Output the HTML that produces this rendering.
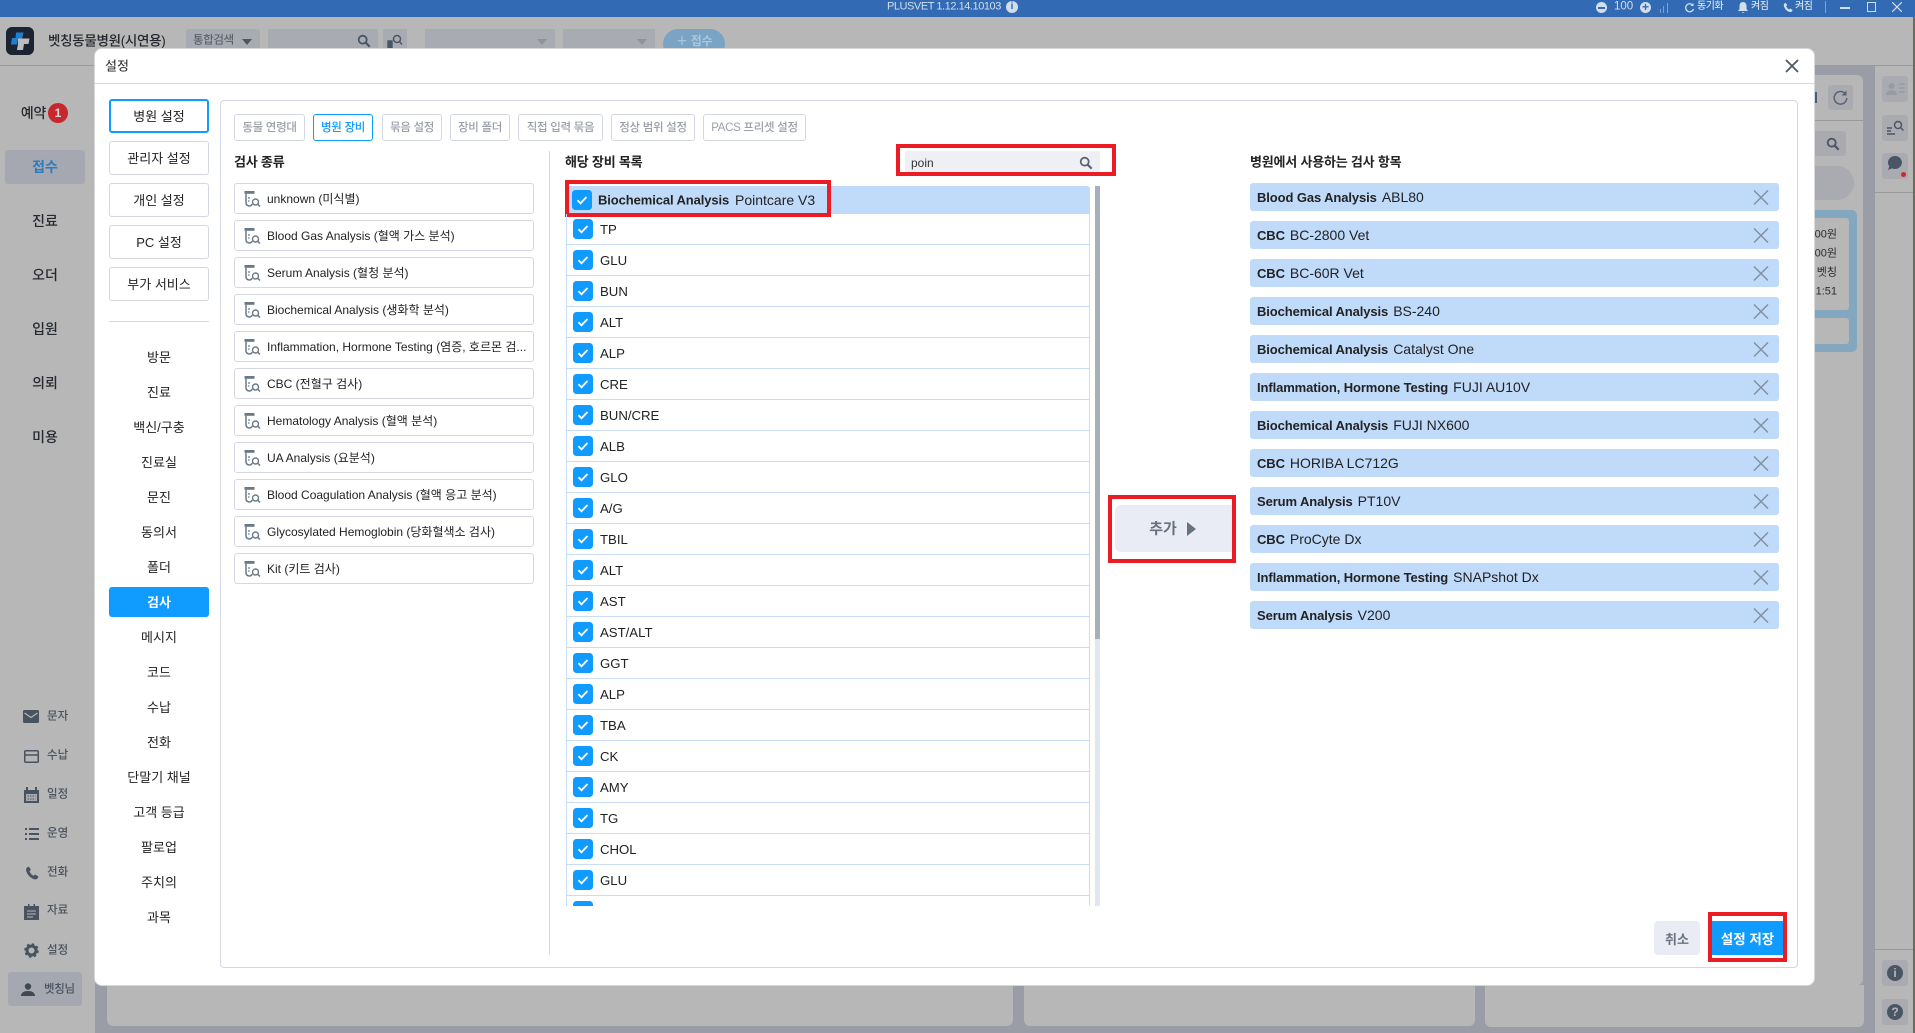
<!DOCTYPE html>
<html lang="ko"><head><meta charset="utf-8"><title>설정</title>
<style>
*{box-sizing:border-box}
html,body{margin:0;padding:0;width:1915px;height:1033px;overflow:hidden;background:#9a9da5;font-family:"Liberation Sans","Noto Sans CJK KR",sans-serif;color:#222}
.a{position:absolute}
.c{position:absolute;transform:translate(-50%,-50%);white-space:nowrap;line-height:1}
.l{position:absolute;transform:translateY(-50%);white-space:nowrap;line-height:1}
.nav{font-size:14px;color:#262a30;font-weight:500}
.sub{font-size:11.5px;color:#49535f;font-weight:500}
.top{font-size:10px;color:#d3deec}
.bt{position:absolute;left:109px;width:100px;height:34px;border:1px solid #d5d8e4;border-radius:3px;background:#fff;font-size:13px;display:flex;align-items:center;justify-content:center;padding-bottom:2px}
.mi{position:absolute;left:109px;width:100px;height:30px;display:flex;align-items:center;justify-content:center;font-size:13px;color:#222;border-radius:3px;padding-bottom:2px}
.tab{position:absolute;top:114px;height:27px;border:1px solid #d5d8e4;border-radius:3px;font-size:11.5px;color:#9aa0aa;display:flex;align-items:center;justify-content:center;white-space:nowrap;letter-spacing:-.3px;font-weight:500;padding-bottom:1px}
.h{position:absolute;top:162px;transform:translateY(-50%);font-size:13px;font-weight:700;line-height:1;color:#222;white-space:nowrap;letter-spacing:-.2px}
.ty{display:block;position:relative;height:31px;margin-bottom:6px;border:1px solid #d5d8e4;border-radius:3px;font-size:12px;line-height:31px;padding-left:32px;white-space:nowrap;background:#fff}
.ty svg{position:absolute;left:8px;top:6px}
.r{position:relative;height:31px;border:1px solid #c8dcf6;border-width:0 1px 1px 1px;font-size:13.2px;line-height:31px;padding-left:33px;color:#222}
.r svg{position:absolute;left:5.5px;top:5px}
.p{display:flex;align-items:center;height:28px;margin-bottom:10px;background:#c0dafa;border-radius:3px;font-size:14px;padding-left:7px;position:relative;white-space:nowrap;color:#222}
.p b{margin-right:5px;letter-spacing:-.1px;font-size:13px}
.p svg{position:absolute;right:10px;top:6.500px}
.red{position:absolute;border:4px solid #ec1c24}
</style></head><body>
<svg width="0" height="0" style="position:absolute">
<symbol id="t" viewBox="0 0 18 18"><path d="M1.500 1h10v2.800h-10z" fill="#6b7886"/><path d="M3 3.800V13a3.300 3.300 0 0 0 6.300 1" fill="none" stroke="#6b7886" stroke-width="1.500"/><circle cx="12.500" cy="12" r="3" fill="none" stroke="#6b7886" stroke-width="1.400"/><path d="M14.700 14.200l2.300 2.300" stroke="#6b7886" stroke-width="1.500"/><path d="M5 8h2M5 11h1.500" stroke="#6b7886" stroke-width="1.200"/></symbol>
<symbol id="k" viewBox="0 0 20 20"><rect width="20" height="20" rx="3.500" fill="#0f9bff"/><path d="M5.500 10.300l3 3 6-6.300" fill="none" stroke="#fff" stroke-width="1.800"/></symbol>
<symbol id="x" viewBox="0 0 16 15"><path d="M1 .5l14 14M15 .5l-14 14" stroke="#8292a3" stroke-width="1.500" fill="none"/></symbol>
<symbol id="s" viewBox="0 0 14 14"><circle cx="5.700" cy="5.700" r="4" fill="none" stroke="currentColor" stroke-width="1.800"/><path d="M8.700 8.700l4 4" stroke="currentColor" stroke-width="2.200"/></symbol>
</svg>

<!-- Title bar -->
<div class="a" style="left:0;top:0;width:1915px;height:17px;background:#326bb3"></div>
<div class="l top" style="left:887px;top:7px;letter-spacing:-.45px;font-size:11px;font-weight:500">PLUSVET 1.12.14.10103</div>
<div class="a" style="left:1006px;top:1px;width:12px;height:12px;border-radius:50%;background:#d3deec;color:#326bb3;font-size:10px;font-weight:700;text-align:center;line-height:12px">i</div>
<div class="a" style="left:1596px;top:2px;width:11px;height:11px;border-radius:50%;background:#d3deec"></div>
<div class="a" style="left:1598px;top:7px;width:7px;height:1.500px;background:#326bb3"></div>
<div class="l top" style="left:1614px;top:7px;font-size:11.500px">100</div>
<div class="a" style="left:1640px;top:2px;width:11px;height:11px;border-radius:50%;background:#d3deec;color:#326bb3;font-size:12px;font-weight:700;text-align:center;line-height:11px">+</div>
<div class="a" style="left:1660px;top:9px;width:1px;height:4px;background:#7f9fcc"></div>
<div class="a" style="left:1663px;top:6px;width:1px;height:7px;background:#7f9fcc"></div>
<div class="a" style="left:1667px;top:3px;width:1px;height:10px;background:#7f9fcc"></div>
<svg class="a" style="left:1684px;top:2px" width="11" height="11" viewBox="0 0 11 11"><path d="M9 3.500A4 4 0 1 0 9.500 7" fill="none" stroke="#d3deec" stroke-width="1.300"/><path d="M9.500 1v3h-3z" fill="#d3deec"/></svg>
<div class="l top" style="left:1697px;top:7px;letter-spacing:-.5px;font-weight:500">동기화</div>
<svg class="a" style="left:1738px;top:2px" width="10" height="11" viewBox="0 0 10 11"><path d="M5 0a3.500 3.500 0 0 1 3.500 3.500V7L10 9H0l1.500-2V3.500A3.500 3.500 0 0 1 5 0zM3.500 10h3L5 11z" fill="#d3deec"/></svg>
<div class="l top" style="left:1751px;top:7px;letter-spacing:-.5px;font-weight:500">켜짐</div>
<svg class="a" style="left:1783px;top:2px" width="10" height="11" viewBox="0 0 24 24"><path d="M6.600 1l3.500 5.500-2.300 2.500c1 3 4 6.500 7 7.800l2.400-2.300L23 18c-.5 3-3 5-5.500 5C9 22 1 12 2 5c.3-2 2-3.500 4.600-4z" fill="#d3deec"/></svg>
<div class="l top" style="left:1795px;top:7px;letter-spacing:-.5px;font-weight:500">켜짐</div>
<div class="a" style="left:1825px;top:1px;width:1px;height:12px;background:#7f9fcc"></div>
<div class="a" style="left:1840px;top:7px;width:10px;height:1.500px;background:#d3deec"></div>
<div class="a" style="left:1867px;top:2px;width:9px;height:10px;border:1px solid #d3deec"></div>
<svg class="a" style="left:1892px;top:2px" width="10" height="10"><path d="M0 0l10 10M10 0L0 10" stroke="#d3deec" stroke-width="1.200"/></svg>

<!-- Dim app behind -->
<div class="a" style="left:0;top:17px;width:1915px;height:48px;background:#b7b7b7"></div>
<div class="a" style="left:0;top:65px;width:1915px;height:1px;background:#9a9a9a"></div>
<div class="a" style="left:0;top:66px;width:95px;height:967px;background:#b7b7b7"></div>
<div class="a" style="left:1875px;top:66px;width:38px;height:967px;background:#b7b7b7"></div>
<div class="a" style="left:1913px;top:17px;width:2px;height:1016px;background:#6b6b5c"></div>
<div class="a" style="left:1875px;top:192px;width:38px;height:1px;background:#9a9a9a"></div>
<div class="a" style="left:1875px;top:949px;width:38px;height:1px;background:#9a9a9a"></div>
<div class="a" style="left:107px;top:985px;width:906px;height:41px;background:#b7b7b7;border-radius:0 0 6px 6px"></div>
<div class="a" style="left:1024px;top:985px;width:451px;height:41px;background:#b7b7b7;border-radius:0 0 6px 6px"></div>
<div class="a" style="left:1485px;top:985px;width:379px;height:42px;background:#b7b7b7;border-radius:0 0 6px 6px"></div>
<div class="a" style="left:1700px;top:75px;width:163px;height:910px;background:#b7b7b7;border-radius:0 6px 6px 0"></div>
<div class="a" style="left:1700px;top:120px;width:163px;height:1px;background:#9a9a9a"></div>
<div class="a" style="left:1815px;top:92px;width:2px;height:11px;background:#3e5f86"></div>
<div class="a" style="left:1828px;top:85px;width:25px;height:25px;background:#a9abb1;border-radius:3px"></div>
<svg class="a" style="left:1832px;top:89px" width="17" height="17" viewBox="0 0 17 17"><path d="M13.500 5A6.300 6.300 0 1 0 14.800 9" fill="none" stroke="#59636f" stroke-width="1.500"/><path d="M14.500 1.500v5h-5z" fill="#59636f"/></svg>
<div class="a" style="left:1800px;top:131px;width:46px;height:25px;background:#a9abb1;border-radius:3px"></div>
<svg class="a" style="left:1826px;top:137px;color:#4b5665" width="14" height="14"><use href="#s"/></svg>
<div class="a" style="left:1780px;top:166px;width:74px;height:34px;background:#a9abb1;border-radius:17px"></div>
<div class="a" style="left:1780px;top:210px;width:77px;height:142px;background:#84a7c0;border-radius:0 5px 5px 0"></div>
<div class="a" style="left:1780px;top:218px;width:69px;height:92px;background:#b7b7b7;border-radius:3px"></div>
<div class="a" style="left:1780px;top:318px;width:69px;height:26px;background:#b7b7b7;border-radius:3px"></div>
<div class="l" style="right:78px;top:235px;font-size:11px;color:#2b2b2b">00원</div>
<div class="l" style="right:78px;top:254px;font-size:11px;color:#2b2b2b">00원</div>
<div class="l" style="right:78px;top:273px;font-size:11px;color:#2b2b2b">벳칭</div>
<div class="l" style="right:78px;top:292px;font-size:11px;color:#2b2b2b">1:51</div>

<div class="a" style="left:1882px;top:76px;width:26px;height:26px;background:#a9abb1;border-radius:3px"></div>
<svg class="a" style="left:1886px;top:82px" width="19" height="14" viewBox="0 0 19 14"><circle cx="5.500" cy="4" r="3" fill="#989ba1"/><path d="M0 13a5.500 5 0 0 1 11 0z" fill="#989ba1"/><path d="M13 2h6M13 6h6M13 10h6" stroke="#989ba1" stroke-width="1.500"/></svg>
<div class="a" style="left:1882px;top:115px;width:26px;height:26px;background:#a9abb1;border-radius:3px"></div>
<svg class="a" style="left:1886px;top:120px" width="18" height="16" viewBox="0 0 18 16"><circle cx="12" cy="5" r="3.500" fill="none" stroke="#4b5665" stroke-width="1.500"/><path d="M14.500 7.500l3 3M1 8h5M1 11h4M1 14h8" stroke="#4b5665" stroke-width="1.400"/></svg>
<div class="a" style="left:1882px;top:153px;width:26px;height:26px;background:#a9abb1;border-radius:3px"></div>
<svg class="a" style="left:1887px;top:155px" width="16" height="16" viewBox="0 0 16 16"><path d="M8 1a7 6.500 0 1 1-3 12.400L1 15l1.300-3.700A7 6.500 0 0 1 8 1z" fill="#4b5665"/></svg>
<div class="a" style="left:1901px;top:172px;width:5px;height:5px;border-radius:50%;background:#cc2a2a"></div>
<div class="a" style="left:1882px;top:960px;width:26px;height:26px;background:#a9abb1;border-radius:3px"></div>
<div class="a" style="left:1887px;top:965px;width:16px;height:16px;border-radius:50%;background:#4b5665;color:#b7b7b7;font-size:12px;font-weight:700;text-align:center;line-height:16px">i</div>
<div class="a" style="left:1882px;top:999px;width:26px;height:26px;background:#a9abb1;border-radius:3px"></div>
<div class="a" style="left:1887px;top:1004px;width:16px;height:16px;border-radius:50%;background:#4b5665;color:#b7b7b7;font-size:12px;font-weight:700;text-align:center;line-height:16px">?</div>

<!-- Header -->
<div class="a" style="left:6px;top:27px;width:28px;height:28px;border-radius:6px;background:#1b2430"></div>
<svg class="a" style="left:6px;top:27px" width="28" height="28" viewBox="0 0 28 28"><path d="M10 5.500h7.500L16 12h-4l-1 5.500H5L6 11h3.500z" fill="#1f7fd0"/><path d="M12 11.500h11.500L22.500 17H18l-1 6h-6l1-6z" fill="#bcbcbc"/></svg>
<div class="l" style="left:48px;top:41px;font-size:13.500px;font-weight:500;color:#23272e;letter-spacing:-.3px">벳칭동물병원(시연용)</div>
<div class="a" style="left:186px;top:29px;width:74px;height:20px;background:#a8abb2;border-radius:3px 3px 0 0"></div>
<div class="l" style="left:193px;top:41px;font-size:11.500px;color:#4b5563;letter-spacing:-.4px">통합검색</div>
<div class="a" style="left:242px;top:39px;border:5px solid transparent;border-top:6px solid #4b5563"></div>
<div class="a" style="left:268px;top:29px;width:110px;height:20px;background:#a8abb2"></div>
<svg class="a" style="left:357px;top:34px;color:#4b5665" width="14" height="14"><use href="#s"/></svg>
<div class="a" style="left:383px;top:29px;width:24px;height:20px;background:#a8abb2"></div>
<svg class="a" style="left:387px;top:34px" width="16" height="14" viewBox="0 0 16 14"><circle cx="10" cy="5" r="3.500" fill="none" stroke="#4b5665" stroke-width="1.500"/><path d="M12.500 7.500l2.500 3M1 7h4v7H1z" stroke="#4b5665" stroke-width="1.400" fill="#4b5665"/></svg>
<div class="a" style="left:425px;top:29px;width:130px;height:20px;background:#a8abb2"></div>
<div class="a" style="left:537px;top:39px;border:5px solid transparent;border-top:6px solid #8e949c"></div>
<div class="a" style="left:563px;top:29px;width:92px;height:20px;background:#a8abb2"></div>
<div class="a" style="left:637px;top:39px;border:5px solid transparent;border-top:6px solid #8e949c"></div>
<div class="a" style="left:663px;top:29px;width:62px;height:30px;border-radius:15px;background:#7ba3c4"></div>
<div class="l" style="left:676px;top:41px;font-size:12px;color:#a9c7df;font-weight:700;letter-spacing:-.3px">＋ 접수</div>

<!-- Left nav -->
<div class="c nav" style="top:113px;transform:translate(-100%,-50%);left:46px;letter-spacing:-.3px">예약</div>
<div class="a" style="left:48px;top:103px;width:20px;height:20px;border-radius:50%;background:#c8272d;color:#d7d7d7;font-size:12px;font-weight:700;text-align:center;line-height:20px">1</div>
<div class="a" style="left:5px;top:150px;width:80px;height:34px;background:#a5a8b1;border-radius:3px"></div>
<div class="c nav" style="left:45px;top:167px;color:#2b7cc0;font-weight:700">접수</div>
<div class="c nav" style="left:45px;top:221px">진료</div>
<div class="c nav" style="left:45px;top:275px">오더</div>
<div class="c nav" style="left:45px;top:329px">입원</div>
<div class="c nav" style="left:45px;top:383px">의뢰</div>
<div class="c nav" style="left:45px;top:437px">미용</div>

<svg class="a" style="left:23px;top:710px" width="16" height="13" viewBox="0 0 16 13"><rect width="16" height="13" rx="1.500" fill="#49535f"/><path d="M1.500 3L8 7.500 14.500 3" fill="none" stroke="#b7b7b7" stroke-width="1.200"/></svg>
<div class="l sub" style="left:47px;top:717px">문자</div>
<svg class="a" style="left:24px;top:750px" width="15" height="13" viewBox="0 0 15 13"><rect x=".75" y=".75" width="13.500" height="11.500" rx="1" fill="none" stroke="#49535f" stroke-width="1.500"/><path d="M1 5h13" stroke="#49535f" stroke-width="1.500"/></svg>
<div class="l sub" style="left:47px;top:756px">수납</div>
<svg class="a" style="left:24px;top:787px" width="15" height="16" viewBox="0 0 15 16"><path d="M0 3h2V0h2v3h7V0h2v3h2v13H0z" fill="#49535f"/><path d="M2 7h11v7H2z" fill="#a9abb1"/><path d="M3.500 9h8M3.500 12h8" stroke="#49535f" stroke-width="1" stroke-dasharray="1.500 1"/></svg>
<div class="l sub" style="left:47px;top:795px">일정</div>
<svg class="a" style="left:25px;top:828px" width="14" height="12" viewBox="0 0 14 12"><path d="M0 1h2M0 6h2M0 11h2M4 1h10M4 6h10M4 11h10" stroke="#49535f" stroke-width="2"/></svg>
<div class="l sub" style="left:47px;top:834px">운영</div>
<svg class="a" style="left:25px;top:866px" width="14" height="14" viewBox="0 0 24 24"><path d="M6.600 1l3.500 5.500-2.300 2.500c1 3 4 6.500 7 7.800l2.400-2.300L23 18c-.5 3-3 5-5.500 5C9 22 1 12 2 5c.3-2 2-3.500 4.600-4z" fill="#49535f"/></svg>
<div class="l sub" style="left:47px;top:873px">전화</div>
<svg class="a" style="left:24px;top:904px" width="15" height="16" viewBox="0 0 15 16"><path d="M0 2h4V0h1.500v2h4V0H11v2h4v14H0z" fill="#49535f"/><path d="M3 7h9M3 10h9M3 13h6" stroke="#b7b7b7" stroke-width="1"/></svg>
<div class="l sub" style="left:47px;top:911px">자료</div>
<svg class="a" style="left:24px;top:943px" width="15" height="15" viewBox="0 0 15 15"><circle cx="7.500" cy="7.500" r="4.500" fill="none" stroke="#49535f" stroke-width="3"/><circle cx="7.500" cy="7.500" r="6.300" fill="none" stroke="#49535f" stroke-width="2" stroke-dasharray="2.500 2.450"/></svg>
<div class="l sub" style="left:47px;top:951px">설정</div>
<div class="a" style="left:8px;top:972px;width:74px;height:34px;background:#a5a8b1;border-radius:3px"></div>
<svg class="a" style="left:21px;top:983px" width="14" height="13" viewBox="0 0 14 13"><circle cx="7" cy="3.500" r="3.200" fill="#3f4853"/><path d="M0 13c0-3.500 3-5 7-5s7 1.500 7 5z" fill="#3f4853"/></svg>
<div class="l sub" style="left:44px;top:990px;letter-spacing:-.3px">벳칭님</div>

<!-- Modal -->
<div class="a" style="left:94px;top:48px;width:1721px;height:938px;background:#fff;border-radius:8px;border:1px solid #d8d8dc"></div>
<div class="l" style="left:105px;top:66px;font-size:13px;color:#222">설정</div>
<div class="a" style="left:95px;top:83px;width:1719px;height:1px;background:#d5d7e2"></div>
<svg class="a" style="left:1785px;top:59px" width="14" height="14"><path d="M1 1l12 12M13 1L1 13" stroke="#4d5967" stroke-width="1.800"/></svg>
<div class="a" style="left:220px;top:100px;width:1578px;height:868px;border:1px solid #d5d7e4;border-radius:4px"></div>

<!-- Setting menus -->
<div class="bt" style="top:99px;border:2px solid #0f9bff">병원 설정</div>
<div class="bt" style="top:141px">관리자 설정</div>
<div class="bt" style="top:183px">개인 설정</div>
<div class="bt" style="top:225px">PC 설정</div>
<div class="bt" style="top:267px">부가 서비스</div>
<div class="a" style="left:109px;top:321px;width:100px;height:1px;background:#d5d7e4"></div>
<div class="mi" style="top:342px">방문</div>
<div class="mi" style="top:377px">진료</div>
<div class="mi" style="top:412px">백신/구충</div>
<div class="mi" style="top:447px">진료실</div>
<div class="mi" style="top:482px">문진</div>
<div class="mi" style="top:517px">동의서</div>
<div class="mi" style="top:552px">폴더</div>
<div class="mi" style="top:587px;background:#0f9bff;color:#fff;font-weight:700">검사</div>
<div class="mi" style="top:622px">메시지</div>
<div class="mi" style="top:657px">코드</div>
<div class="mi" style="top:692px">수납</div>
<div class="mi" style="top:727px">전화</div>
<div class="mi" style="top:762px">단말기 채널</div>
<div class="mi" style="top:797px">고객 등급</div>
<div class="mi" style="top:832px">팔로업</div>
<div class="mi" style="top:867px">주치의</div>
<div class="mi" style="top:902px">과목</div>

<!-- Tabs -->
<div class="tab" style="left:234px;width:71px">동물 연령대</div>
<div class="tab" style="left:313px;width:60px;color:#0f9bff;border-color:#0f9bff">병원 장비</div>
<div class="tab" style="left:382px;width:60px">묶음 설정</div>
<div class="tab" style="left:450px;width:60px">장비 폴더</div>
<div class="tab" style="left:518px;width:85px">직접 입력 묶음</div>
<div class="tab" style="left:611px;width:84px">정상 범위 설정</div>
<div class="tab" style="left:703px;width:103px">PACS 프리셋 설정</div>

<div class="h" style="left:234px">검사 종류</div>
<div class="a" style="left:234px;top:183px;width:300px">
<div class="ty"><svg width="18" height="18"><use href="#t"/></svg>unknown (미식별)</div>
<div class="ty"><svg width="18" height="18"><use href="#t"/></svg>Blood Gas Analysis (혈액 가스 분석)</div>
<div class="ty"><svg width="18" height="18"><use href="#t"/></svg>Serum Analysis (혈청 분석)</div>
<div class="ty"><svg width="18" height="18"><use href="#t"/></svg>Biochemical Analysis (생화학 분석)</div>
<div class="ty"><svg width="18" height="18"><use href="#t"/></svg>Inflammation, Hormone Testing (염증, 호르몬 검...</div>
<div class="ty"><svg width="18" height="18"><use href="#t"/></svg>CBC (전혈구 검사)</div>
<div class="ty"><svg width="18" height="18"><use href="#t"/></svg>Hematology Analysis (혈액 분석)</div>
<div class="ty"><svg width="18" height="18"><use href="#t"/></svg>UA Analysis (요분석)</div>
<div class="ty"><svg width="18" height="18"><use href="#t"/></svg>Blood Coagulation Analysis (혈액 응고 분석)</div>
<div class="ty"><svg width="18" height="18"><use href="#t"/></svg>Glycosylated Hemoglobin (당화혈색소 검사)</div>
<div class="ty"><svg width="18" height="18"><use href="#t"/></svg>Kit (키트 검사)</div>
</div>
<div class="a" style="left:549px;top:151px;width:1px;height:804px;background:#d5d7e4"></div>

<!-- Middle list -->
<div class="h" style="left:565px">해당 장비 목록</div>
<div class="red" style="left:896px;top:144px;width:220px;height:32px"></div>
<div class="a" style="left:905px;top:151px;width:195px;height:21px;background:#eef0f6;border-radius:2px"></div>
<div class="l" style="left:911px;top:163px;font-size:12px;color:#333">poin</div>
<svg class="a" style="left:1079px;top:156px;color:#5a6674" width="14" height="14"><use href="#s"/></svg>

<div class="a" style="left:566px;top:186px;width:524px;height:28px;background:#c0dafa;border-radius:3px 3px 0 0"></div>
<svg class="a" style="left:572px;top:190px" width="20" height="20"><use href="#k"/></svg>
<div class="l" style="left:598px;top:200px;font-size:13px;font-weight:700;color:#222;letter-spacing:-.1px">Biochemical Analysis</div>
<div class="l" style="left:735px;top:200px;font-size:14px;color:#222">Pointcare V3</div>
<div class="red" style="left:565px;top:180px;width:266px;height:37px"></div>

<div class="a" style="left:566px;top:214px;width:524px;height:692px;overflow:hidden">
<div class="r"><svg width="20" height="20"><use href="#k"/></svg>TP</div>
<div class="r"><svg width="20" height="20"><use href="#k"/></svg>GLU</div>
<div class="r"><svg width="20" height="20"><use href="#k"/></svg>BUN</div>
<div class="r"><svg width="20" height="20"><use href="#k"/></svg>ALT</div>
<div class="r"><svg width="20" height="20"><use href="#k"/></svg>ALP</div>
<div class="r"><svg width="20" height="20"><use href="#k"/></svg>CRE</div>
<div class="r"><svg width="20" height="20"><use href="#k"/></svg>BUN/CRE</div>
<div class="r"><svg width="20" height="20"><use href="#k"/></svg>ALB</div>
<div class="r"><svg width="20" height="20"><use href="#k"/></svg>GLO</div>
<div class="r"><svg width="20" height="20"><use href="#k"/></svg>A/G</div>
<div class="r"><svg width="20" height="20"><use href="#k"/></svg>TBIL</div>
<div class="r"><svg width="20" height="20"><use href="#k"/></svg>ALT</div>
<div class="r"><svg width="20" height="20"><use href="#k"/></svg>AST</div>
<div class="r"><svg width="20" height="20"><use href="#k"/></svg>AST/ALT</div>
<div class="r"><svg width="20" height="20"><use href="#k"/></svg>GGT</div>
<div class="r"><svg width="20" height="20"><use href="#k"/></svg>ALP</div>
<div class="r"><svg width="20" height="20"><use href="#k"/></svg>TBA</div>
<div class="r"><svg width="20" height="20"><use href="#k"/></svg>CK</div>
<div class="r"><svg width="20" height="20"><use href="#k"/></svg>AMY</div>
<div class="r"><svg width="20" height="20"><use href="#k"/></svg>TG</div>
<div class="r"><svg width="20" height="20"><use href="#k"/></svg>CHOL</div>
<div class="r"><svg width="20" height="20"><use href="#k"/></svg>GLU</div>
<div class="r"><svg width="20" height="20"><use href="#k"/></svg></div>
</div>
<div class="a" style="left:1095px;top:186px;width:5px;height:720px;background:#e0e6f2"></div>
<div class="a" style="left:1095px;top:186px;width:5px;height:453px;background:#a7afbb"></div>

<!-- Add -->
<div class="a" style="left:1115px;top:505px;width:118px;height:47px;background:#e9ecf4;border-radius:6px 0 0 6px"></div>
<div class="red" style="left:1108px;top:495px;width:128px;height:68px"></div>
<div class="c" style="left:1163px;top:529px;font-size:15px;font-weight:700;color:#68727f">추가</div>
<svg class="a" style="left:1187px;top:522px" width="9" height="14"><path d="M0 0l9 7-9 7z" fill="#68727f"/></svg>

<!-- Right list -->
<div class="h" style="left:1250px">병원에서 사용하는 검사 항목</div>
<div class="a" style="left:1250px;top:183px;width:529px">
<div class="p"><b>Blood Gas Analysis</b>ABL80<svg width="16" height="15"><use href="#x"/></svg></div>
<div class="p"><b>CBC</b>BC-2800 Vet<svg width="16" height="15"><use href="#x"/></svg></div>
<div class="p"><b>CBC</b>BC-60R Vet<svg width="16" height="15"><use href="#x"/></svg></div>
<div class="p"><b>Biochemical Analysis</b>BS-240<svg width="16" height="15"><use href="#x"/></svg></div>
<div class="p"><b>Biochemical Analysis</b>Catalyst One<svg width="16" height="15"><use href="#x"/></svg></div>
<div class="p"><b>Inflammation, Hormone Testing</b>FUJI AU10V<svg width="16" height="15"><use href="#x"/></svg></div>
<div class="p"><b>Biochemical Analysis</b>FUJI NX600<svg width="16" height="15"><use href="#x"/></svg></div>
<div class="p"><b>CBC</b>HORIBA LC712G<svg width="16" height="15"><use href="#x"/></svg></div>
<div class="p"><b>Serum Analysis</b>PT10V<svg width="16" height="15"><use href="#x"/></svg></div>
<div class="p"><b>CBC</b>ProCyte Dx<svg width="16" height="15"><use href="#x"/></svg></div>
<div class="p"><b>Inflammation, Hormone Testing</b>SNAPshot Dx<svg width="16" height="15"><use href="#x"/></svg></div>
<div class="p"><b>Serum Analysis</b>V200<svg width="16" height="15"><use href="#x"/></svg></div>
</div>

<!-- Footer -->
<div class="a" style="left:1654px;top:921px;width:46px;height:34px;background:#e9ecf4;border-radius:4px;display:flex;align-items:center;justify-content:center;font-size:13px;font-weight:700;color:#6b7480">취소</div>
<div class="a" style="left:1712px;top:921px;width:71px;height:34px;background:#0f9bff;display:flex;align-items:center;justify-content:center;font-size:13.500px;font-weight:700;color:#fff;white-space:nowrap">설정 저장</div>
<div class="red" style="left:1708px;top:912px;width:79px;height:50px"></div>
</body></html>
